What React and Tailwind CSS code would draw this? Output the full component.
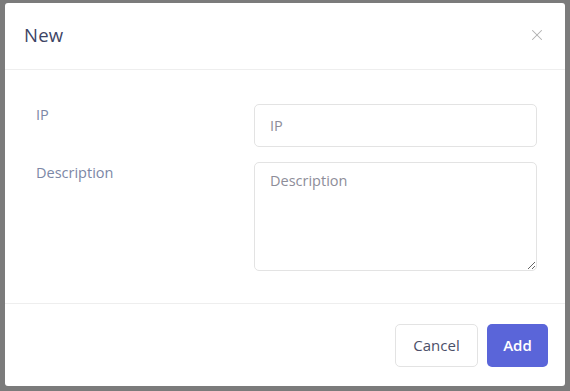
import { X } from "lucide-react";

export default function App() {
  return (
    <div className="h-[391px] w-[570px] bg-[#7b7b7b] pt-[3px] pl-[5px] overflow-hidden font-['Open_Sans',sans-serif]">
      {/* modal */}
      <div className="w-[560px] h-[383px] bg-white rounded-[3px] flex flex-col">
        {/* header */}
        <div className="h-[67px] border-b border-[#eeeeee] flex items-center justify-between pl-[19px] pr-[19px] pb-[2px] shrink-0">
          <h5 className="text-[18.5px] font-medium text-[#3d4465] tracking-[0.2px]">New</h5>
          <X className="w-[18px] h-[18px] text-[#b0b0b0]" strokeWidth={1.4} />
        </div>

        {/* body */}
        <div className="flex-1 pt-[34px] pl-[31px] pr-[28px] flex flex-col gap-[15px]">
          <div className="flex">
            <label className="w-[218px] text-[14.5px] text-[#7c87a6] pt-[1px] leading-[20px]">IP</label>
            <input
              placeholder="IP"
              className="w-[283px] h-[43px] border border-[#e3e3e3] rounded-[5px] px-[15px] text-[14.5px] placeholder-[#8d8d99] outline-none"
            />
          </div>
          <div className="flex">
            <label className="w-[218px] text-[14.5px] text-[#7c87a6] pt-[1px] leading-[20px]">Description</label>
            <textarea
              placeholder="Description"
              className="w-[283px] h-[109px] border border-[#e3e3e3] rounded-[5px] px-[15px] py-[7px] text-[14.5px] placeholder-[#8d8d99] outline-none"
            />
          </div>
        </div>

        {/* footer */}
        <div className="h-[83px] border-t border-[#eeeeee] flex items-center justify-end gap-[9px] pr-[17px] shrink-0">
          <button className="w-[83px] h-[43px] border border-[#e3e3e3] rounded-[5px] text-[15px] text-[#4b5069] bg-white">
            Cancel
          </button>
          <button className="w-[61px] h-[43px] rounded-[5px] text-[15px] font-semibold text-white bg-[#5a65d9]">
            Add
          </button>
        </div>
      </div>
    </div>
  );
}
